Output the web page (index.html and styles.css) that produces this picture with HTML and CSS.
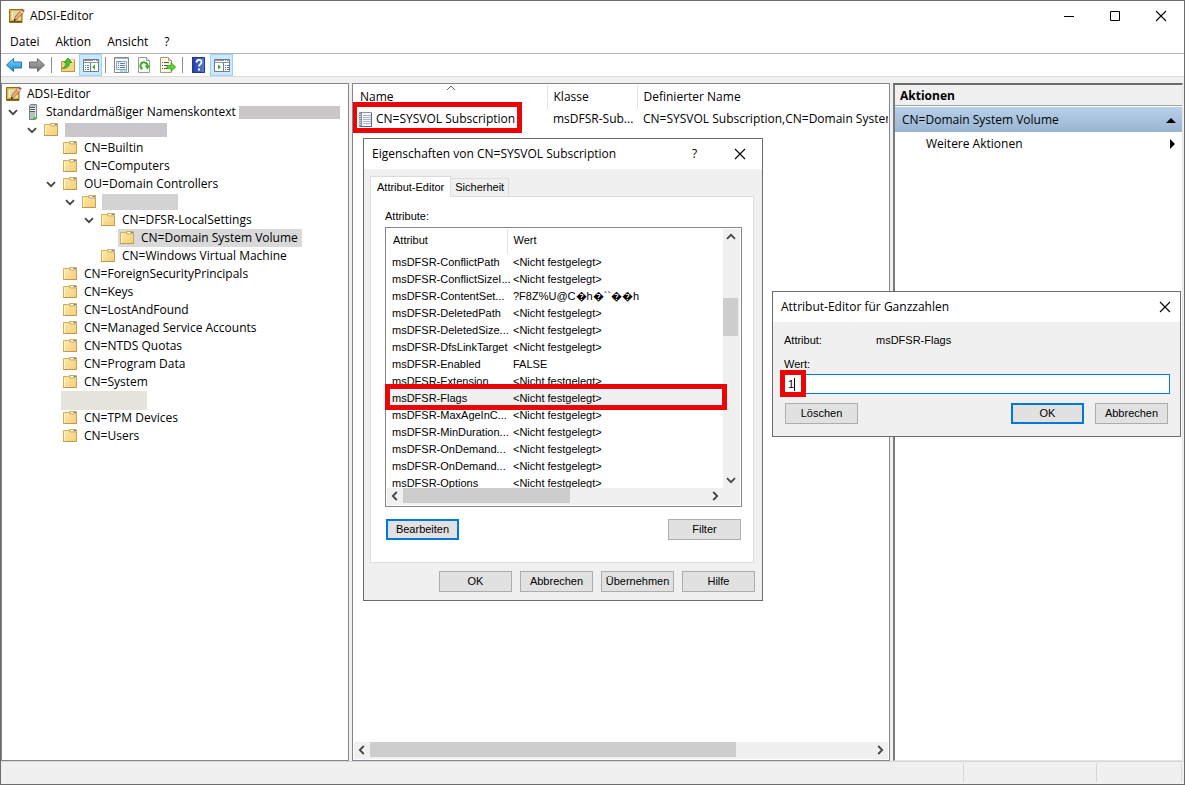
FILE: index.html
```html
<!DOCTYPE html>
<html lang="de">
<head>
<meta charset="utf-8">
<title>ADSI-Editor</title>
<link rel="stylesheet" href="styles.css">
</head>
<body>
<svg class="sprite" aria-hidden="true">
  <defs>
    <linearGradient id="g-folder" x1="0" y1="0" x2="1" y2="1"><stop offset="0" stop-color="#ffeaa6"/><stop offset="1" stop-color="#f2cd78"/></linearGradient>
    <linearGradient id="g-blue" x1="0" y1="0" x2="0" y2="1"><stop offset="0" stop-color="#8fd8fa"/><stop offset="1" stop-color="#1187d8"/></linearGradient>
    <linearGradient id="g-gray" x1="0" y1="0" x2="0" y2="1"><stop offset="0" stop-color="#b5b5b5"/><stop offset="1" stop-color="#6d6d6d"/></linearGradient>
    <linearGradient id="g-help" x1="0" y1="0" x2="1" y2="0"><stop offset="0" stop-color="#2438a0"/><stop offset="1" stop-color="#5a80dc"/></linearGradient>
    <symbol id="i-folder" viewBox="0 0 16 16">
      <path d="M6.500 4V1.500h7V5" fill="#f3dfa0" stroke="#d0ab5c"/>
      <path d="M8 2h5v1H8z" fill="#fff"/><path d="M10.500 2H13v1h-2.500z" fill="#3a93e0"/>
      <path d="M.5 2.500H5.500l1.500 1.500h6.500v9.500H.5z" fill="url(#g-folder)" stroke="#d2ad60"/>
      <path d="M1.500 4v9" stroke="#fff6cf"/><path d="M0 13.500h14" stroke="#c09a4c"/><path d="M13.500 4v10" stroke="#c7a052"/>
    </symbol>
    <symbol id="i-editor" viewBox="0 0 16 16">
      <path d="M.5 1.500h12.500v13H.5z" fill="#d9b548" stroke="#8f7020"/>
      <path d="M1 13.500h12" stroke="#6f5510"/>
      <path d="M2.500 3.500h9v8h-9z" fill="#fbf3d4"/><path d="M4 5h5M4 7h4M4 9h3" stroke="#c9b98a"/>
      <path d="M5 13l1-4 5.500-6.500 2.800 2L8.500 11z" fill="#eba868" stroke="#8a5a2a" stroke-width=".7"/>
      <path d="M12 1.800L13 .6l2.800 1.800-1.200 1.700z" fill="#d33c40"/><path d="M11.300 2.800l2.800 1.800" stroke="#cfdde6" stroke-width="1.300"/>
      <path d="M4.800 13.200l.7-2.400 1.500 1z" fill="#222"/>
    </symbol>
    <symbol id="i-server" viewBox="0 0 16 16">
      <path d="M4.500 1.500l1-1h6v14l-1 1h-6z" fill="#b8c0c4" stroke="#7a8286"/>
      <path d="M10.500 2v13" stroke="#dfe4e6"/><path d="M5 3.500h5M5 5.500h5M5 7.500h5" stroke="#525a5e"/>
      <path d="M5 4.500h5M5 6.500h5" stroke="#f0f3f4"/><path d="M8 13h3v2H8z" fill="#38d91f"/>
    </symbol>
    <symbol id="i-chev" viewBox="0 0 16 16"><path d="M4 6.200L8 10.200l4-4" fill="none" stroke="#454545" stroke-width="1.800"/></symbol>
    <symbol id="i-arrow" viewBox="0 0 16 16"><path d="M.5 8l7-6.500v3.500h8v6h-8v3.500z"/></symbol>
    <symbol id="i-up" viewBox="0 0 16 16">
      <path d="M1.500 4.500h5l1-2h7v12h-13z" fill="#f4d581" stroke="#c09443"/><path d="M9 2.500h5v2H8z" fill="#fff7dc"/>
      <path d="M2 11.500q4-1 4-6H4l4-4.500 4 4.500H9.500q0 6-7.500 6z" fill="#45c326" stroke="#2b8b17" stroke-width=".7"/>
    </symbol>
    <symbol id="i-tree" viewBox="0 0 16 16">
      <path d="M.5 2.500h15v12H.5z" fill="#fff" stroke="#777c82"/><path d="M1 3.500h14M1 5.500h14" stroke="#8d949b"/><path d="M10 3.500h1M12 3.500h1" stroke="#fff"/>
      <path d="M7.500 6v8" stroke="#777c82"/><path d="M2 8.500h1M4 8.500h2M2 10.500h1M4 10.500h2M2 12.500h1M4 12.500h2" stroke="#367bbd"/>
      <path d="M12 7.500v5l-3-2.500z" fill="#3ba92b"/>
    </symbol>
    <symbol id="i-actions" viewBox="0 0 16 16">
      <path d="M.5 2.500h15v12H.5z" fill="#fff" stroke="#777c82"/><path d="M1 3.500h14M1 5.500h14" stroke="#8d949b"/><path d="M10 3.500h1M12 3.500h1" stroke="#fff"/>
      <path d="M9.500 6v8" stroke="#777c82"/><path d="M11 8.500h1M13 8.500h2M11 10.500h1M13 10.500h2M11 12.500h1M13 12.500h2" stroke="#367bbd"/>
      <path d="M4 7.500v5l3-2.500z" fill="#3ba92b"/>
    </symbol>
    <symbol id="i-props" viewBox="0 0 16 16">
      <path d="M.5.500h14v15H.5z" fill="#fff" stroke="#85898e"/><path d="M1 1.500h13" stroke="#a9b7c4"/>
      <path d="M2.500 4.500h10v8h-10z" fill="#eef3f8" stroke="#8fa6ba"/><path d="M3 4.500h4M4 6.500h1M6 6.500h5M4 8.500h1M6 8.500h5M4 10.500h1M6 10.500h5" stroke="#62839f"/>
      <path d="M6 14h3M10 14h3" stroke="#2fb3e8"/>
    </symbol>
    <symbol id="i-refresh" viewBox="0 0 16 16">
      <path d="M1.500.500h8l3 3v12h-11z" fill="#fafafa" stroke="#9a9a9a"/><path d="M9.500.500v3h3" fill="#e8e8e8" stroke="#9a9a9a"/>
      <path d="M5.500 12A3.500 3.500 0 1 1 10.500 9" fill="none" stroke="#3eaf2b" stroke-width="2"/><path d="M7.500 8.500h5.500l-2.500 4z" fill="#3eaf2b"/>
    </symbol>
    <symbol id="i-export" viewBox="0 0 16 16">
      <path d="M.5.500h8l3 3v12H.5z" fill="#fff9e0" stroke="#a39d87"/><path d="M8.500.500v3h3" fill="#eee5c5" stroke="#a39d87"/>
      <path d="M2 5.500h1M4 5.500h5M2 8.500h1M4 8.500h4M2 11.500h1M4 11.500h4" stroke="#4e5863"/>
      <path d="M7 8.500h4V5.500l4.700 4.500-4.700 4.500v-3H7z" fill="#57d32d" stroke="#35961d" stroke-width=".7"/>
    </symbol>
    <symbol id="i-help" viewBox="0 0 16 16">
      <path d="M1 0h13v16H1z" fill="url(#g-help)"/><path d="M1.500.500h12v15h-12z" fill="none" stroke="#20388e"/>
      <path d="M5.500 5.500q0-2.700 2.500-2.700t2.500 2.200q0 1.500-1.500 2.400-1 .7-1 2.100" fill="none" stroke="#fff" stroke-width="1.800"/><path d="M7 11.500h2v2H7z" fill="#fff"/>
    </symbol>
    <symbol id="i-book" viewBox="0 0 16 16">
      <path d="M1.500.500h12v14h-12z" fill="#f7f9fc" stroke="#8c93a6"/><path d="M1 1v14h3V1z" fill="#8a8f98"/>
      <path d="M0 2.500h3M0 4.500h3M0 6.500h3M0 8.500h3M0 10.500h3M0 12.500h3" stroke="#d4d7dc"/>
      <path d="M5 3.500h8M5 5.500h8M5 7.500h8M5 9.500h8M5 11.500h8" stroke="#a9b3c6"/><path d="M2 14.500h11.500V1" fill="none" stroke="#5565a8"/>
    </symbol>
    <symbol id="i-close" viewBox="0 0 12 12"><path d="M1 1l10 10M11 1L1 11" fill="none" stroke="#000" stroke-width="1.100"/></symbol>
  </defs>
</svg>

<main class="window">
  <header class="titlebar">
    <svg class="icon"><use href="#i-editor"/></svg>
    <h1 class="title">ADSI-Editor</h1>
    <div class="caption">
      <button aria-label="Minimieren"><svg viewBox="0 0 12 12"><path d="M1 6.500h10" stroke="#000"/></svg></button>
      <button aria-label="Maximieren"><svg viewBox="0 0 12 12"><path d="M1.500 1.500h9v9h-9z" fill="none" stroke="#000"/></svg></button>
      <button aria-label="Schließen"><svg><use href="#i-close"/></svg></button>
    </div>
  </header>

  <nav class="menubar">
    <button>Datei</button><button>Aktion</button><button>Ansicht</button><button>?</button>
  </nav>

  <div class="toolbar">
    <button aria-label="Zurück"><svg class="icon" fill="url(#g-blue)" stroke="#1b77b5"><use href="#i-arrow"/></svg></button>
    <button aria-label="Vorwärts"><svg class="icon flip" fill="url(#g-gray)" stroke="#696969"><use href="#i-arrow"/></svg></button>
    <span class="sep"></span>
    <button aria-label="Eine Ebene nach oben"><svg class="icon"><use href="#i-up"/></svg></button>
    <button class="on" aria-label="Konsolenstruktur"><svg class="icon"><use href="#i-tree"/></svg></button>
    <span class="sep"></span>
    <button aria-label="Eigenschaften"><svg class="icon"><use href="#i-props"/></svg></button>
    <button aria-label="Aktualisieren"><svg class="icon"><use href="#i-refresh"/></svg></button>
    <button aria-label="Liste exportieren"><svg class="icon"><use href="#i-export"/></svg></button>
    <span class="sep"></span>
    <button aria-label="Hilfe"><svg class="icon"><use href="#i-help"/></svg></button>
    <button class="on" aria-label="Aktionsbereich"><svg class="icon"><use href="#i-actions"/></svg></button>
  </div>

  <div class="content">
    <section class="tree">
      <div class="row root"><span class="label"><svg class="icon"><use href="#i-editor"/></svg>ADSI-Editor</span></div>
      <ul>
        <li><div class="row"><svg class="icon"><use href="#i-chev"/></svg><span class="label"><svg class="icon"><use href="#i-server"/></svg>Standardmäßiger Namenskontext</span><span class="mask mask-server"></span></div>
          <ul>
            <li><div class="row"><svg class="icon"><use href="#i-chev"/></svg><span class="label"><svg class="icon"><use href="#i-folder"/></svg><span class="mask mask-domain"></span></span></div>
              <ul>
                <li><div class="row leaf"><span class="label"><svg class="icon"><use href="#i-folder"/></svg>CN=Builtin</span></div></li>
                <li><div class="row leaf"><span class="label"><svg class="icon"><use href="#i-folder"/></svg>CN=Computers</span></div></li>
                <li><div class="row"><svg class="icon"><use href="#i-chev"/></svg><span class="label"><svg class="icon"><use href="#i-folder"/></svg>OU=Domain Controllers</span></div>
                  <ul>
                    <li><div class="row"><svg class="icon"><use href="#i-chev"/></svg><span class="label"><svg class="icon"><use href="#i-folder"/></svg><span class="mask mask-host"></span></span></div>
                      <ul>
                        <li><div class="row"><svg class="icon"><use href="#i-chev"/></svg><span class="label"><svg class="icon"><use href="#i-folder"/></svg>CN=DFSR-LocalSettings</span></div>
                          <ul>
                            <li><div class="row leaf"><span class="label selected"><svg class="icon"><use href="#i-folder"/></svg>CN=Domain System Volume</span></div></li>
                          </ul>
                        </li>
                        <li><div class="row leaf"><span class="label"><svg class="icon"><use href="#i-folder"/></svg>CN=Windows Virtual Machine</span></div></li>
                      </ul>
                    </li>
                  </ul>
                </li>
                <li><div class="row leaf"><span class="label"><svg class="icon"><use href="#i-folder"/></svg>CN=ForeignSecurityPrincipals</span></div></li>
                <li><div class="row leaf"><span class="label"><svg class="icon"><use href="#i-folder"/></svg>CN=Keys</span></div></li>
                <li><div class="row leaf"><span class="label"><svg class="icon"><use href="#i-folder"/></svg>CN=LostAndFound</span></div></li>
                <li><div class="row leaf"><span class="label"><svg class="icon"><use href="#i-folder"/></svg>CN=Managed Service Accounts</span></div></li>
                <li><div class="row leaf"><span class="label"><svg class="icon"><use href="#i-folder"/></svg>CN=NTDS Quotas</span></div></li>
                <li><div class="row leaf"><span class="label"><svg class="icon"><use href="#i-folder"/></svg>CN=Program Data</span></div></li>
                <li><div class="row leaf"><span class="label"><svg class="icon"><use href="#i-folder"/></svg>CN=System</span></div></li>
                <li><div class="row leaf"><span class="mask mask-item"></span></div></li>
                <li><div class="row leaf"><span class="label"><svg class="icon"><use href="#i-folder"/></svg>CN=TPM Devices</span></div></li>
                <li><div class="row leaf"><span class="label"><svg class="icon"><use href="#i-folder"/></svg>CN=Users</span></div></li>
              </ul>
            </li>
          </ul>
        </li>
      </ul>
    </section>

    <section class="list">
      <div class="list-view">
        <table class="objects">
          <colgroup><col class="c-name"><col class="c-class"><col></colgroup>
          <thead><tr><th>Name<svg class="sort" viewBox="0 0 10 6"><path d="M1 5l4-4 4 4" fill="none" stroke="#666"/></svg></th><th>Klasse</th><th>Definierter Name</th></tr></thead>
          <tbody><tr><td><svg class="icon"><use href="#i-book"/></svg>CN=SYSVOL Subscription</td><td>msDFSR-Sub...</td><td>CN=SYSVOL Subscription,CN=Domain System</td></tr></tbody>
        </table>
      </div>
      <div class="hscroll">
        <svg class="icon left"><use href="#i-chev"/></svg>
        <div class="track"><div class="thumb thumb-list"></div></div>
        <svg class="icon right"><use href="#i-chev"/></svg>
      </div>
      <div class="mark mark-object"></div>
    </section>

    <aside class="actions">
      <h2>Aktionen</h2>
      <button class="group">CN=Domain System Volume<svg viewBox="0 0 10 10"><path d="M0 8h10L5 3z"/></svg></button>
      <button class="more">Weitere Aktionen<svg viewBox="0 0 10 10"><path d="M3 0v10l5-5z"/></svg></button>
    </aside>
  </div>

  <footer class="status"><span></span><span></span><span></span></footer>
</main>

<section class="dialog properties" role="dialog" aria-labelledby="props-title">
  <header class="dialog-title">
    <h2 id="props-title">Eigenschaften von CN=SYSVOL Subscription</h2>
    <button class="ask" aria-label="Hilfe">?</button>
    <button aria-label="Schließen"><svg><use href="#i-close"/></svg></button>
  </header>
  <div class="props-body">
    <div class="tabs" role="tablist">
      <button class="tab active" role="tab" aria-selected="true">Attribut-Editor</button>
      <button class="tab" role="tab" aria-selected="false">Sicherheit</button>
    </div>
    <div class="page">
      <div class="page-label">Attribute:</div>
      <div class="attrs">
        <div class="attrs-main">
          <div class="attrs-view">
            <table>
              <colgroup><col class="c-attr"><col></colgroup>
              <thead><tr><th>Attribut</th><th>Wert</th></tr></thead>
              <tbody>
                <tr><td>msDFSR-ConflictPath</td><td>&lt;Nicht festgelegt&gt;</td></tr>
                <tr><td>msDFSR-ConflictSizeI...</td><td>&lt;Nicht festgelegt&gt;</td></tr>
                <tr><td>msDFSR-ContentSet...</td><td>?F8Z%U@C�h�``��h</td></tr>
                <tr><td>msDFSR-DeletedPath</td><td>&lt;Nicht festgelegt&gt;</td></tr>
                <tr><td>msDFSR-DeletedSize...</td><td>&lt;Nicht festgelegt&gt;</td></tr>
                <tr><td>msDFSR-DfsLinkTarget</td><td>&lt;Nicht festgelegt&gt;</td></tr>
                <tr><td>msDFSR-Enabled</td><td>FALSE</td></tr>
                <tr><td>msDFSR-Extension</td><td>&lt;Nicht festgelegt&gt;</td></tr>
                <tr class="current"><td>msDFSR-Flags</td><td>&lt;Nicht festgelegt&gt;</td></tr>
                <tr><td>msDFSR-MaxAgeInC...</td><td>&lt;Nicht festgelegt&gt;</td></tr>
                <tr><td>msDFSR-MinDuration...</td><td>&lt;Nicht festgelegt&gt;</td></tr>
                <tr><td>msDFSR-OnDemand...</td><td>&lt;Nicht festgelegt&gt;</td></tr>
                <tr><td>msDFSR-OnDemand...</td><td>&lt;Nicht festgelegt&gt;</td></tr>
                <tr><td>msDFSR-Options</td><td>&lt;Nicht festgelegt&gt;</td></tr>
              </tbody>
            </table>
          </div>
          <div class="vscroll">
            <svg class="icon up"><use href="#i-chev"/></svg>
            <div class="vtrack"><div class="vthumb"></div></div>
            <svg class="icon"><use href="#i-chev"/></svg>
          </div>
        </div>
        <div class="hscroll">
          <svg class="icon left"><use href="#i-chev"/></svg>
          <div class="track"><div class="thumb thumb-attrs"></div></div>
          <svg class="icon right"><use href="#i-chev"/></svg>
          <span class="corner"></span>
        </div>
        <div class="mark mark-flags"></div>
      </div>
      <div class="page-buttons"><button class="btn default">Bearbeiten</button><button class="btn">Filter</button></div>
    </div>
    <div class="dialog-buttons"><button class="btn">OK</button><button class="btn">Abbrechen</button><button class="btn">Übernehmen</button><button class="btn">Hilfe</button></div>
  </div>
</section>

<section class="dialog integer" role="dialog" aria-labelledby="int-title">
  <header class="dialog-title">
    <h2 id="int-title">Attribut-Editor für Ganzzahlen</h2>
    <button aria-label="Schließen"><svg><use href="#i-close"/></svg></button>
  </header>
  <form class="int-body">
    <div class="pair"><span>Attribut:</span><span>msDFSR-Flags</span></div>
    <label for="wert">Wert:</label>
    <div class="field"><input id="wert" type="text" value="1"><span class="mark mark-value"></span><span class="caret"></span></div>
    <div class="int-buttons"><button type="button" class="btn">Löschen</button><button type="button" class="btn default">OK</button><button type="button" class="btn">Abbrechen</button></div>
  </form>
</section>
</body>
</html>
```
FILE: styles.css
```css
* { box-sizing: border-box; }
html, body { height: 100%; }
body { margin: 0; overflow: hidden; font-family: "Open Sans", "Noto Sans", sans-serif; font-size: 12px; line-height: 18px; color: #000; }
button, input { font: inherit; color: inherit; margin: 0; padding: 0; border: 0; background: none; border-radius: 0; }
h1, h2 { margin: 0; font-size: 12px; font-weight: 400; }
ul { list-style: none; margin: 0; padding: 0; }
table { border-collapse: collapse; table-layout: fixed; width: 100%; }
th, td { padding: 0; font-weight: 400; text-align: left; white-space: nowrap; }
.sprite { position: absolute; width: 0; height: 0; }
.icon { width: 16px; height: 16px; flex: none; display: block; }

.window { height: 100vh; display: flex; flex-direction: column; border: 1px solid #6b6b6e; background: #fff; }
.titlebar { display: flex; align-items: center; height: 30px; padding-left: 8px; gap: 5px; flex: none; }
.title { flex: 1; }
.caption { display: flex; }
.caption button { width: 46px; height: 28px; display: flex; align-items: center; justify-content: center; }
.caption svg, .dialog-title svg { width: 12px; height: 12px; display: block; }

.menubar { display: flex; height: 23px; padding-left: 1px; flex: none; border-bottom: 1px solid #b0b4bc; }
.menubar button { padding: 0 8px; }
.toolbar { display: flex; align-items: stretch; height: 23px; flex: none; padding-left: 1px; border-bottom: 1px solid #dcdcdc; }
.toolbar button { width: 23px; display: flex; align-items: center; justify-content: center; }
.toolbar button.on { background: #cce8ff; border: 1px solid #99d1ff; }
.toolbar .sep { width: 1px; margin: 3px 4px 3px 3px; background: #8c8c8c; }
.flip { transform: scaleX(-1); }

.content { flex: 1; min-height: 0; display: grid; grid-template-columns: 348px minmax(0, 538fr) minmax(0, 290fr); column-gap: 3px; padding: 6px 1px 0 0; background: #f0f0f0; }
.tree, .list { background: #fff; border: 1px solid #828790; overflow: hidden; }
.tree { padding-top: 1px; }
.row { display: flex; align-items: center; height: 18px; padding-left: 3px; gap: 2px; }
.row.root { padding-left: 2px; }
.row.leaf { padding-left: 21px; }
.tree ul ul { padding-left: 19px; }
.label { display: flex; align-items: center; gap: 5px; height: 18px; padding: 0 4px 0 2px; white-space: nowrap; }
.selected { background: #d9d9d9; }
.mask { display: block; flex: none; background: #cbc7c9; }
.mask-server { width: 101px; height: 13px; margin-left: -3px; }
.mask-domain { width: 102px; height: 14px; background: #c8c6cb; }
.mask-host { width: 76px; height: 16px; margin-left: -1px; background: #d4d3d4; }
.mask-item { width: 86px; height: 19px; background: #e6e3dc; }

.list { position: relative; display: flex; flex-direction: column; padding: 1px; }
.list-view { flex: 1; overflow: hidden; }
.objects .c-name { width: 193px; }
.objects .c-class { width: 90px; }
.objects th { height: 24px; padding-left: 6px; border-right: 1px solid #e2e2e2; position: relative; }
.objects th:last-child { border-right: 0; }
.objects td { height: 20px; padding-left: 6px; }
.objects .icon { display: inline-block; vertical-align: middle; }
.objects td:first-child { padding-left: 4px; }
.objects td .icon { margin-right: 2px; }
.sort { position: absolute; left: 48%; top: 0; width: 10px; height: 6px; }
.mark { position: absolute; border: 5px solid #ea0606; pointer-events: none; }
.mark-object { left: -1px; top: 18px; width: 170px; height: 31px; }

.hscroll { display: flex; height: 17px; padding-bottom: 1px; background: #f0f0f0; flex: none; }
.track { flex: 1; }
.thumb { height: 15px; background: #cdcdcd; }
.thumb-list { width: 73%; }
.left { transform: rotate(90deg); }
.right { transform: rotate(-90deg); }
.up { transform: rotate(180deg); }

.actions { background: #fff; border: solid #e3e3e3; border-width: 2px 1px 1px 2px; border-top-color: #6b6b6b; border-left-color: #7b7b7b; }
.actions h2 { height: 21px; line-height: 21px; padding-left: 5px; font-weight: 700; background: #f0f0f0; border-bottom: 1px solid #a0a0a0; margin-bottom: 1px; }
.actions button { display: flex; align-items: center; justify-content: space-between; width: 100%; }
.actions svg { width: 10px; height: 10px; }
.group { height: 25px; padding: 0 6px 0 7px; background: linear-gradient(#b9d1ea, #99b4d1); }
.more { height: 24px; padding: 0 5px 0 31px; }

.status { height: 23px; flex: none; display: grid; grid-template-columns: 1fr 133px 85px; padding: 1px 2px 2px 0; background: #f0f0f0; border-top: 1px solid #d7d7d7; }
.status span { border-right: 1px solid #d7d7d7; }

.dialog { position: absolute; background: #f0f0f0; border: 1px solid #6b6b6e; }
.dialog-title { display: flex; align-items: center; height: 30px; padding-left: 8px; background: #fff; }
.dialog-title h2 { flex: 1; }
.dialog-title button { width: 45px; height: 30px; display: flex; align-items: center; justify-content: center; }
.properties { left: 363px; top: 138px; width: 400px; }
.props-body, .int-body { font-family: "Liberation Sans", Arial, sans-serif; font-size: 11px; line-height: 17px; }
.props-body { padding: 7px 7px 8px 6px; }
.tabs { display: flex; align-items: flex-end; }
.tab { height: 18px; padding: 0 4px; border: 1px solid #dcdcdc; border-width: 1px 1px 0 0; background: #f0f0f0; }
.tab.active { height: 21px; padding: 0 6px; border-width: 1px 1px 0; background: #fff; margin-bottom: -1px; z-index: 1; }
.page { background: #fff; border: 1px solid #dcdcdc; margin-right: 1px; padding: 11px 11px 22px 14px; }
.page-label { margin-bottom: 2px; }
.attrs { position: relative; border: 1px solid #828790; padding: 1px; }
.attrs-main { display: flex; height: 259px; }
.attrs-view { flex: 1; overflow: hidden; }
.attrs .c-attr { width: 120px; }
.attrs th { height: 25px; padding: 0 0 2px 6px; }
.attrs th:first-child { border-right: 1px solid #e2e2e2; }
.attrs td { height: 17px; padding-left: 5px; }
.attrs td + td { padding-left: 6px; }
.current { background: #f0f0f0; }
.vscroll { width: 17px; padding-right: 1px; background: #f0f0f0; display: flex; flex-direction: column; }
.vtrack { flex: 1; padding-top: 53px; }
.vthumb { width: 15px; height: 38px; background: #cdcdcd; }
.thumb-attrs { width: 55%; }
.corner { width: 17px; }
.mark-flags { left: -1px; top: 156px; width: 342px; height: 26px; }
.btn { width: 73px; height: 21px; background: #e1e1e1; border: 1px solid #adadad; text-align: center; }
.btn.default { border: 2px solid #0078d7; }
.page-buttons { display: flex; justify-content: space-between; padding: 12px 1px 0; }
.dialog-buttons { display: flex; justify-content: flex-end; gap: 8px; padding-top: 8px; }

.integer { left: 772px; top: 291px; width: 409px; }
.integer .dialog-title button { width: 30px; }
.int-body { padding: 10px 10px 12px 11px; }
.pair { display: grid; grid-template-columns: 92px 1fr; margin-bottom: 7px; }
.int-body label { display: block; margin-bottom: 1px; }
.field { position: relative; margin-bottom: 9px; }
.field input { display: block; width: 100%; height: 20px; padding-left: 3px; background: #fff; border: 1px solid #0078d7; outline: 0; }
.mark-value { left: -4px; top: -4px; width: 26px; height: 27px; }
.caret { position: absolute; left: 10px; top: 4px; width: 1px; height: 13px; background: #000; }
.int-buttons { display: grid; grid-template-columns: 1fr 73px 73px; gap: 11px; padding: 0 2px 0 1px; }
```
